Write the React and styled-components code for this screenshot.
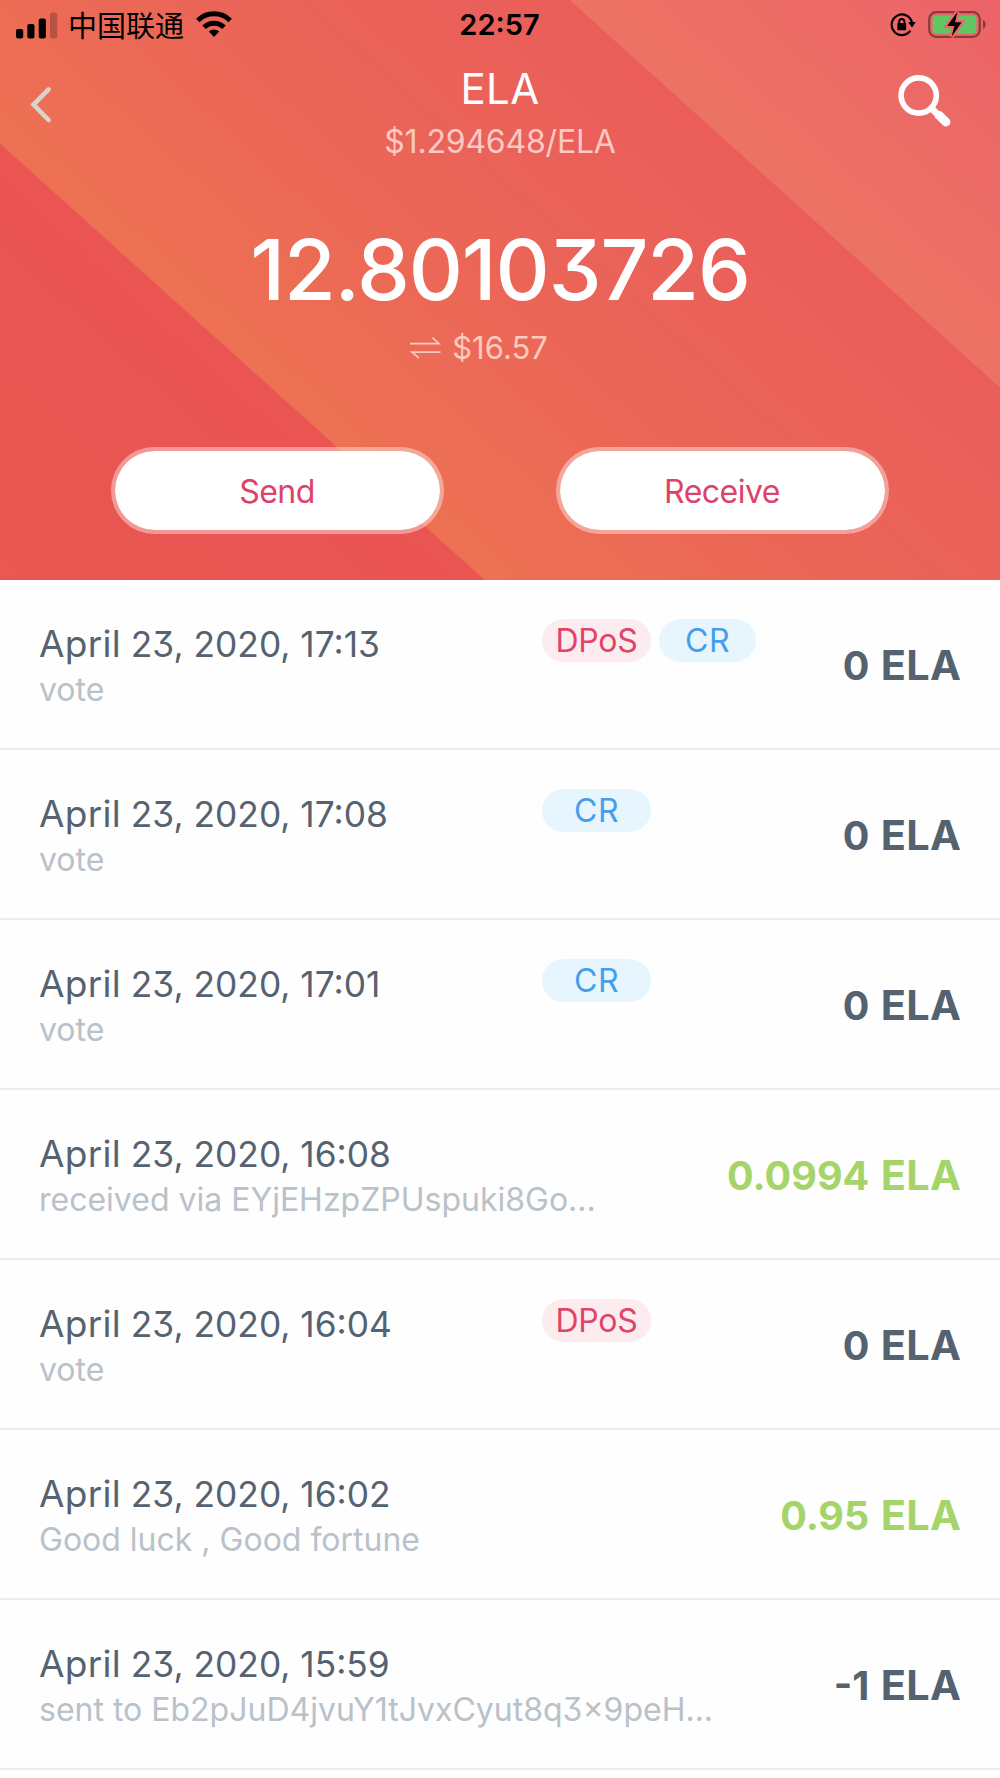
import React from "react";
import styled, { createGlobalStyle } from "styled-components";

const GlobalStyle = createGlobalStyle`
  body {
    margin: 0;
    background: #fff;
    font-family: Inter, "Noto Sans CJK SC", sans-serif;
    font-feature-settings: "cv09";
  }
`;

const Screen = styled.main`
  width: 1000px;
  height: 1778px;
  overflow: hidden;
  background: #fefefe;
`;

const Header = styled.header`
  box-sizing: border-box;
  height: 580px;
  background: linear-gradient(
    42deg,
    #e95852 0%,
    #ea5453 29.4%,
    #ed7153 29.55%,
    #eb6657 50%,
    #ea5d5b 73.75%,
    #ec7364 73.9%,
    #ec6368 100%
  );
`;

const StatusBar = styled.div`
  display: grid;
  grid-template-columns: 1fr auto 1fr;
  align-items: center;
  height: 50px;
  padding: 0 13px 0 16px;
  color: #000;
`;

const StatusGroup = styled.div`
  display: flex;
  align-items: center;
  height: 50px;
  justify-content: ${(p) => (p.$end ? "flex-end" : "flex-start")};
  gap: ${(p) => p.$gap};
`;

const Carrier = styled.span`
  font: 400 29px/48px "Noto Sans CJK SC", sans-serif;
  height: 50px;
  margin: 0 0 0 -2px;
`;

const Clock = styled.span`
  margin-right: 4px;
  font-size: 29px;
  font-weight: 600;
  line-height: 50px;
`;

const NavBar = styled.nav`
  display: grid;
  grid-template-columns: 53px 1fr 53px;
  height: 111px;
  padding: 13px 49px 0 28px;
  box-sizing: border-box;
`;

const IconButton = styled.button`
  display: flex;
  align-items: flex-start;
  border: 0;
  padding: 0;
  background: none;
  height: 53px;
  margin-top: ${(p) => p.$top};
`;

const Heading = styled.div`
  display: flex;
  flex-direction: column;
  align-items: center;
  gap: 7px;
  padding-left: 21px;
`;

const Title = styled.h1`
  margin: 0;
  color: #fff;
  font-size: 42px;
  font-weight: 400;
  line-height: 52px;
  letter-spacing: 0.4px;
`;

const Price = styled.p`
  margin: 0;
  color: #fbcac4;
  font-size: 32px;
  line-height: 40px;
  letter-spacing: -0.2px;
`;

const Balance = styled.p`
  margin: 64px 0 0;
  color: #fff;
  text-align: center;
  font-size: 84px;
  font-weight: 500;
  line-height: 90px;
  letter-spacing: -1.1px;
`;

const FiatValue = styled.p`
  display: flex;
  justify-content: center;
  align-items: center;
  gap: 11px;
  margin: 14px 0 0;
  padding-right: 42px;
  color: #fbcac0;
  font-size: 31px;
  line-height: 37px;
`;

const Actions = styled.div`
  display: flex;
  justify-content: space-between;
  padding: 81px 111px 0;
`;

const PillButton = styled.button`
  box-sizing: border-box;
  width: 333px;
  height: 87px;
  padding: 1px 1px 0 0;
  border: 4px solid rgba(255, 255, 255, 0.4);
  border-radius: 44px;
  background: #fff;
  background-clip: padding-box;
  color: #dd426b;
  font-family: inherit;
  font-feature-settings: inherit;
  font-size: 32px;
  letter-spacing: -0.5px;
`;

const List = styled.ul`
  margin: 0;
  padding: 0;
  list-style: none;
`;

const Row = styled.li`
  box-sizing: border-box;
  display: flex;
  align-items: center;
  height: 170px;
  padding: 0 38.5px 0 39px;
  border-bottom: 2px solid #ebecee;
  white-space: nowrap;
`;

const Info = styled.div`
  flex: 1;
  align-self: flex-start;
  padding-top: 42px;
`;

const InfoTop = styled.div`
  display: flex;
  height: 44px;
`;

const DateText = styled.span`
  width: 503px;
  color: #556270;
  font-size: 35.3px;
  line-height: 44px;
`;

const Month = styled.span`
  font-size: 37px;
  letter-spacing: 0.3px;
  word-spacing: -1px;
`;

const Note = styled.p`
  margin: 2px 0 0;
  color: #b9c1c9;
  font-size: 32px;
  line-height: 44px;
`;

const Badges = styled.div`
  display: flex;
  gap: 8px;
  height: 43px;
  margin-top: -3px;
`;

const Badge = styled.span`
  width: 97px;
  border-radius: 22px;
  text-align: center;
  font-size: 32px;
  line-height: 43px;
  letter-spacing: ${(p) => (p.$kind === "CR" ? "0.5px" : "-0.3px")};
  color: ${(p) => (p.$kind === "CR" ? "#479ee8" : "#e04468")};
  background: ${(p) => (p.$kind === "CR" ? "#e6f5fe" : "#fcebef")};

  &:first-child {
    width: 109px;
  }
`;

const Amount = styled.strong`
  padding-top: 3px;
  font-size: 39.5px;
  font-weight: 700;
  line-height: 50px;
  word-spacing: 2px;
  color: ${(p) => (p.$incoming ? "#a5d468" : "#556270")};
`;

const Unit = styled.span`
  font-size: 41.5px;
  letter-spacing: 0.4px;
`;

const transactions = [
  { month: "April", when: "23, 2020, 17:13", note: "vote", badges: ["DPoS", "CR"], amount: "0" },
  { month: "April", when: "23, 2020, 17:08", note: "vote", badges: ["CR"], amount: "0" },
  { month: "April", when: "23, 2020, 17:01", note: "vote", badges: ["CR"], amount: "0" },
  { month: "April", when: "23, 2020, 16:08", note: "received via EYjEHzpZPUspuki8Go...", badges: [], amount: "0.0994", incoming: true },
  { month: "April", when: "23, 2020, 16:04", note: "vote", badges: ["DPoS"], amount: "0" },
  { month: "April", when: "23, 2020, 16:02", note: "Good luck , Good fortune", badges: [], amount: "0.95", incoming: true },
  { month: "April", when: "23, 2020, 15:59", note: "sent to Eb2pJuD4jvuY1tJvxCyut8q3×9peH...", badges: [], amount: "-1" },
];

const SignalIcon = () => (
  <svg width="42" height="27" viewBox="0 0 42 27">
    <rect x="0" y="17" width="7.2" height="9.6" rx="2" />
    <rect x="11.3" y="12" width="7.2" height="14.6" rx="2" />
    <rect x="22.7" y="6.5" width="7.2" height="20" rx="2" />
    <rect x="34" y="0.5" width="7.2" height="26" rx="2" opacity="0.22" />
  </svg>
);

const WifiIcon = () => (
  <svg width="36" height="28" viewBox="0 0 36 28" fill="none" stroke="#000" strokeWidth="5">
    <path d="M1.8 9.4a23 23 0 0 1 32.4 0" />
    <path d="M8 16.2a14.4 14.4 0 0 1 20 0" />
    <path d="M18 26l-5.2-5.4a7.8 7.8 0 0 1 10.4 0z" fill="#000" stroke="none" />
  </svg>
);

const RotationLockIcon = () => (
  <svg width="26" height="24" viewBox="0 0 26 24">
    <path d="M20.4 17.7A10.3 10.3 0 1 1 22 9.5" fill="none" stroke="#000" strokeWidth="2.2" />
    <path d="M18.2 9h7.6l-3.8 5.4z" />
    <rect x="7.4" y="10" width="8.8" height="7.2" rx="0.8" />
    <path d="M9.2 10.5V8.6a2.6 2.6 0 0 1 5.2 0v1.9" fill="none" stroke="#000" strokeWidth="1.8" />
  </svg>
);

const BatteryIcon = () => (
  <svg width="59" height="30" viewBox="0 0 59 30">
    <rect x="1.2" y="2.2" width="50.6" height="24.6" rx="7" fill="none" stroke="#8a3a3c" strokeWidth="2.2" />
    <path d="M55 10c3.6 1.2 3.6 7.8 0 9z" fill="#8a3a3c" />
    <rect x="4.6" y="5.4" width="43.8" height="18.2" rx="4" fill="#62c665" />
    <path
      d="M29.5 1.8L19.2 16h7.2l-2.8 10.8L33.6 12.2h-6.6z"
      fill="#000"
      stroke="#ea6669"
      strokeWidth="4.4"
      paintOrder="stroke"
    />
  </svg>
);

const BackIcon = () => (
  <svg width="26" height="38" viewBox="0 0 26 38" fill="none" stroke="#dcd3c8" strokeWidth="4.6">
    <path d="M20.6 3.4L5.5 18.6l15.1 15.4" strokeLinecap="round" />
  </svg>
);

const SearchIcon = () => (
  <svg width="53" height="53" viewBox="0 0 53 53" fill="none" stroke="#fff" strokeLinecap="round">
    <circle cx="20.7" cy="20.5" r="17.6" strokeWidth="5.6" />
    <path d="M33.5 33.5l7 6.500" strokeWidth="6.6" />
    <path d="M41 40.300l7 6.700" strokeWidth="8.8" />
  </svg>
);

const SwapIcon = () => (
  <svg width="31" height="22" viewBox="0 0 31 22" fill="none" stroke="#fbcac0" strokeWidth="1.7">
    <path d="M0 6.7h29L22.5 0.7" />
    <path d="M30.5 15.1H2l7 6" />
  </svg>
);

export default function App() {
  return (
    <Screen>
      <GlobalStyle />
      <Header>
        <StatusBar>
          <StatusGroup $gap="12px">
            <SignalIcon />
            <Carrier>中国联通</Carrier>
            <WifiIcon />
          </StatusGroup>
          <Clock>22:57</Clock>
          <StatusGroup $end $gap="12px">
            <RotationLockIcon />
            <BatteryIcon />
          </StatusGroup>
        </StatusBar>
        <NavBar>
          <IconButton $top="23px" aria-label="Back">
            <BackIcon />
          </IconButton>
          <Heading>
            <Title>ELA</Title>
            <Price>$1.294648/ELA</Price>
          </Heading>
          <IconButton $top="12px" aria-label="Search">
            <SearchIcon />
          </IconButton>
        </NavBar>
        <Balance>12.80103726</Balance>
        <FiatValue>
          <SwapIcon />
          $16.57
        </FiatValue>
        <Actions>
          <PillButton>Send</PillButton>
          <PillButton>Receive</PillButton>
        </Actions>
      </Header>
      <List>
        {transactions.map((tx) => (
          <Row key={tx.when}>
            <Info>
              <InfoTop>
                <DateText>
                  <Month>{tx.month} </Month>
                  {tx.when}
                </DateText>
                <Badges>
                  {tx.badges.map((kind) => (
                    <Badge key={kind} $kind={kind}>
                      {kind}
                    </Badge>
                  ))}
                </Badges>
              </InfoTop>
              <Note>{tx.note}</Note>
            </Info>
            <Amount $incoming={tx.incoming}>
              {tx.amount} <Unit>ELA</Unit>
            </Amount>
          </Row>
        ))}
      </List>
    </Screen>
  );
}
